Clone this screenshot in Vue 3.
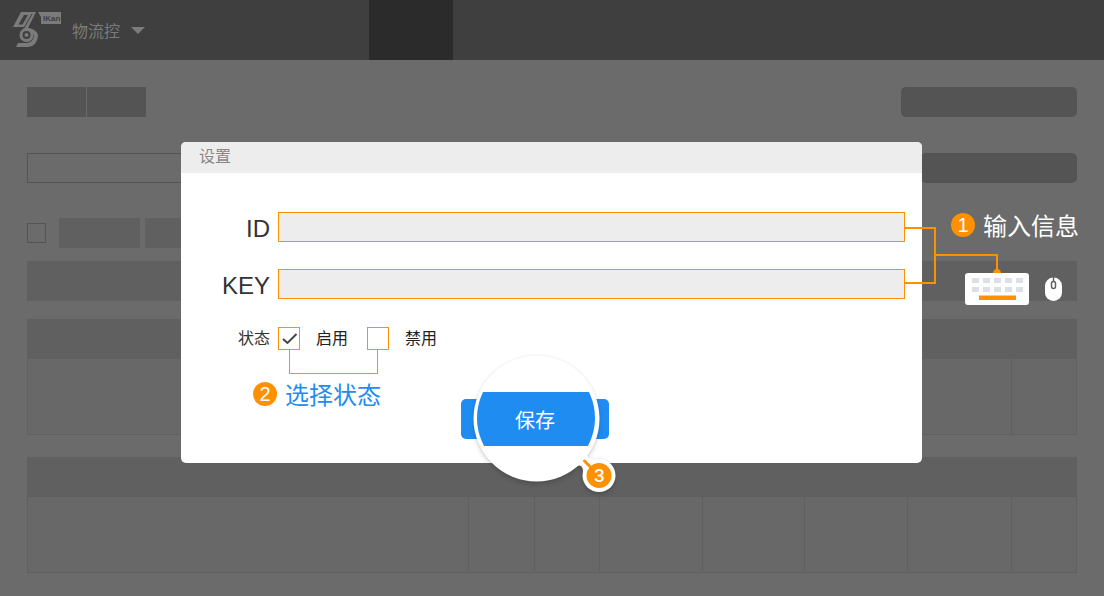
<script setup>
import { ref } from 'vue'

const accountId = ref('')
const accountKey = ref('')
const enabled = ref(true)
const disabled = ref(false)

const keyColumns = [67, 78, 89, 100, 111]
const keyRows = [78, 87]
</script>

<template>
  <div class="page">
    <header class="topbar">
      <a class="brand" href="#" aria-label="物流控">
        <svg class="logo" viewBox="0 0 50 36" width="50" height="36" aria-hidden="true">
          <path class="logo-fill" fill-rule="evenodd" d="M8 0H23L15 16L18 16.500Q25 19 25 24Q24 34 15 35H3L5 31H14Q20 30 21 24Q20 19 14 18H10L11.500 15H0Z M11 3L5.500 12.500H9.500L15 3Z" />
          <path class="logo-gap" d="M19 2L11 16" />
          <circle class="logo-line" cx="13.500" cy="23" r="5.500" />
          <circle class="logo-fill" cx="13.500" cy="23" r="2" />
          <path class="logo-fill" d="M25 0H48V12H28V5Z" />
          <text class="logo-text" x="30" y="9">IKan</text>
        </svg>
        <span class="brand-name">物流控</span>
        <svg class="caret" viewBox="0 0 14 7" width="14" height="7" aria-hidden="true">
          <path d="M0 0H14L7 7Z" />
        </svg>
      </a>
      <nav class="nav"><span class="nav-active"></span></nav>
    </header>

    <main class="content">
      <div class="row row-top">
        <div class="tabs"><span></span><span></span></div>
        <div class="pill"></div>
      </div>
      <div class="row row-search">
        <input class="search" type="text" aria-label="搜索" tabindex="-1" />
        <div class="pill pill-short"></div>
      </div>
      <div class="row row-tools">
        <input class="tick-all" type="checkbox" aria-label="全选" tabindex="-1" />
        <span class="tool"></span>
        <span class="tool"></span>
      </div>
      <div class="bar"></div>
      <section v-for="n in 2" :key="n" class="panel" :class="{ last: n === 2 }">
        <div class="panel-head"></div>
        <div class="panel-body"><span v-for="c in 8" :key="c"></span></div>
      </section>
    </main>

    <div class="overlay">
      <form class="dialog" role="dialog" aria-labelledby="dialog-title" @submit.prevent>
        <h1 id="dialog-title" class="dialog-title">设置</h1>
        <div class="fields">
          <div class="field">
            <label class="name" for="account-id">ID</label>
            <input id="account-id" v-model="accountId" class="entry" type="text" />
          </div>
          <div class="field">
            <label class="name" for="account-key">KEY</label>
            <input id="account-key" v-model="accountKey" class="entry" type="text" />
          </div>
          <div class="field">
            <span class="name small">状态</span>
            <div class="choices">
              <label class="choice">
                <span class="box">
                  <input v-model="enabled" type="checkbox" />
                  <svg v-if="enabled" viewBox="0 0 22 23" width="22" height="23" aria-hidden="true">
                    <path d="M5 12L9.500 16L18.500 7" />
                  </svg>
                </span>
                启用
              </label>
              <label class="choice">
                <span class="box">
                  <input v-model="disabled" type="checkbox" />
                  <svg v-if="disabled" viewBox="0 0 22 23" width="22" height="23" aria-hidden="true">
                    <path d="M5 12L9.500 16L18.500 7" />
                  </svg>
                </span>
                禁用
              </label>
              <span class="bracket"></span>
            </div>
          </div>
        </div>

        <div class="actions">
          <p class="step step-two"><span class="badge">2</span>选择状态</p>
          <button class="save" type="submit">
            <svg class="lens" viewBox="0 0 148 40" width="148" height="40" aria-hidden="true">
              <defs>
                <clipPath id="lens-clip"><circle cx="75" cy="19" r="59" /></clipPath>
              </defs>
              <g class="lens-glass">
                <circle cx="75.500" cy="19.500" r="63" />
                <circle cx="138" cy="76.500" r="16.500" />
                <path d="M110 71Q117 65 120 67Q123 70 122 78L138 61Q130 61 127 58Q125 56 129 50Z" />
              </g>
              <rect class="lens-fill" x="10" y="-7" width="130" height="54" clip-path="url(#lens-clip)" />
              <path class="pointer" d="M123.500 62L134 72.500" />
              <circle class="pointer-dot" cx="138" cy="76.500" r="12.500" />
              <text class="pointer-text" x="138.500" y="83">3</text>
            </svg>
            <span class="save-text">保存</span>
          </button>
        </div>

        <aside class="guide">
          <svg viewBox="0 0 160 110" width="160" height="110" aria-hidden="true">
            <path class="wire" d="M0 28H30V83H0M30 55H92V72" />
            <path class="node" d="M88 74Q88 69 92 69T96 74Z" />
            <rect class="device" x="60" y="73" width="64" height="32" rx="3" />
            <template v-for="y in keyRows" :key="y">
              <rect v-for="x in keyColumns" :key="x" class="keycap" :x="x" :y="y" width="7" height="5" />
            </template>
            <rect class="spacebar" x="74" y="95.500" width="37" height="4.500" />
            <rect class="device" x="140" y="77.500" width="17" height="23.500" rx="8.500" />
            <path class="wheel" d="M148.500 77V81" />
            <rect class="wheel" x="146.500" y="81.500" width="4" height="7" rx="2" />
          </svg>
          <p class="step step-one"><span class="badge">1</span>输入信息</p>
        </aside>
      </form>
    </div>
  </div>
</template>

<style>
body {
  margin: 0;
  background: #6b6b6b;
}
</style>

<style scoped>
* {
  box-sizing: border-box;
}

.page {
  position: relative;
  min-height: 100vh;
  background: #6b6b6b;
  font-family: "Liberation Sans", "Noto Sans CJK SC", sans-serif;
}

.topbar {
  display: flex;
  height: 60px;
  background: #3f3f3f;
}

.brand {
  display: flex;
  align-items: center;
  width: 369px;
  padding-left: 13px;
  color: #7b7b7b;
  font-size: 16px;
  text-decoration: none;
}

.brand-name {
  margin: 0 11px 0 9px;
}

.caret {
  fill: #7b7b7b;
}

.logo-line {
  fill: #3f3f3f;
  stroke: #7b7b7b;
  stroke-width: 3;
}

.logo-gap {
  stroke: #3f3f3f;
  stroke-width: 1;
}

.logo-fill {
  fill: #7b7b7b;
}

.logo-text {
  fill: #3f3f3f;
  font-size: 8px;
  font-weight: 700;
}

.nav-active {
  display: block;
  width: 84px;
  height: 100%;
  background: #2b2b2b;
}

.content {
  padding: 27px 27px 0;
}

.row {
  display: flex;
  height: 30px;
}

.row-top,
.row-search {
  justify-content: space-between;
  margin-bottom: 36px;
}

.tabs {
  display: flex;
  gap: 1px;
}

.tabs span {
  width: 59px;
  background: #545454;
}

.pill {
  width: 176px;
  border-radius: 5px;
  background: #545454;
}

.pill-short {
  width: 156px;
}

.search {
  width: 300px;
  border: 1px solid #545454;
  background: transparent;
}

.row-search {
  margin-bottom: 35px;
}

.row-tools {
  align-items: center;
  gap: 5px;
  margin-bottom: 13px;
}

.tick-all {
  appearance: none;
  width: 19px;
  height: 20px;
  margin: 0 8px 0 0;
  border: 1px solid #545454;
}

.tool {
  width: 81px;
  height: 30px;
  background: #606060;
}

.bar {
  height: 40px;
  margin-bottom: 18px;
  background: #606060;
}

.panel {
  margin-bottom: 22px;
  border: 1px solid #606060;
  border-top: 0;
  background: #686868;
}

.panel.last {
  margin-bottom: 0;
}

.panel-head {
  height: 40px;
  background: #606060;
}

.panel-body {
  display: grid;
  grid-template-columns: 440fr 66fr 65fr 103fr 102fr 103fr 104fr 65fr;
  height: 75px;
}

.panel-body span + span {
  border-left: 1px solid #606060;
}

.overlay {
  position: absolute;
  inset: 0;
  padding: 142px 182px 0 181px;
}

.dialog {
  position: relative;
  border-radius: 5px;
  background: #fff;
}

.dialog-title {
  margin: 0;
  padding: 0 0 2px 18px;
  border-radius: 5px 5px 0 0;
  background: #ededed;
  color: #888;
  font-size: 16px;
  font-weight: 400;
  line-height: 29px;
}

.fields {
  display: flex;
  flex-direction: column;
  gap: 27px;
  padding: 39px 17px 0 0;
}

.field {
  display: grid;
  grid-template-columns: 89px 1fr;
  align-items: center;
  column-gap: 8px;
}

.name {
  padding-top: 3px;
  color: #333;
  font-size: 24px;
  line-height: 27px;
  text-align: right;
}

.name.small {
  padding-top: 0;
  font-size: 16px;
  line-height: 25px;
}

.entry {
  width: 100%;
  height: 30px;
  padding: 0 8px;
  border: 1px solid #ff9000;
  border-radius: 0;
  outline: 0;
  background: #ededed;
  font: inherit;
}

.choices {
  position: relative;
  display: flex;
  gap: 19px;
}

.choice {
  display: flex;
  align-items: center;
  gap: 16px;
  color: #222;
  font-size: 16px;
  line-height: 25px;
}

.box {
  position: relative;
  width: 22px;
  height: 23px;
}

.box input {
  appearance: none;
  display: block;
  width: 22px;
  height: 23px;
  margin: 0;
  border: 1px solid #ff9000;
  background: #fff;
}

.box svg {
  position: absolute;
  inset: 0;
  fill: none;
  stroke: #444;
  stroke-width: 2;
  pointer-events: none;
}

.bracket {
  position: absolute;
  top: 24px;
  left: 11px;
  width: 89px;
  height: 24px;
  border: 1px solid #ff9000;
  border-top: 0;
}

.actions {
  display: grid;
  grid-template-columns: 1fr auto 1fr;
  align-items: start;
  padding: 31px 33px 24px 0;
}

.step {
  display: flex;
  align-items: flex-start;
  gap: 8px;
  margin: 0;
  font-size: 24px;
  line-height: 28px;
  white-space: nowrap;
}

.badge {
  width: 24px;
  height: 24px;
  border-radius: 50%;
  background: #ff9000;
  color: #fff;
  font-size: 20px;
  line-height: 25px;
  text-align: center;
}

.step-two {
  padding-left: 72px;
  color: #1f8cf2;
}

.save {
  position: relative;
  width: 148px;
  height: 40px;
  margin-top: 17px;
  padding: 0;
  border: 0;
  border-radius: 5px;
  background: #1f8cf2;
  color: #fff;
  font: inherit;
  font-size: 20px;
}

.lens {
  position: absolute;
  top: 0;
  left: 0;
  overflow: visible;
}

.lens-glass {
  fill: #fff;
  filter: drop-shadow(0 0 1px rgba(0, 0, 0, 0.1)) drop-shadow(0 3px 2px rgba(0, 0, 0, 0.15));
}

.lens-fill {
  fill: #1f8cf2;
}

.pointer {
  stroke: #ff9000;
  stroke-width: 3;
  stroke-linecap: round;
}

.pointer-dot {
  fill: #ff9000;
}

.pointer-text {
  fill: #fff;
  font-family: Roboto, "Liberation Sans", sans-serif;
  font-size: 19px;
  font-weight: 500;
  text-anchor: middle;
}

.save-text {
  position: relative;
}

.guide {
  position: absolute;
  top: 58px;
  left: calc(100% - 17px);
}

.guide svg {
  display: block;
}

.step-one {
  position: absolute;
  top: 13px;
  left: 46px;
  color: #fff;
}

.wire {
  fill: none;
  stroke: #ff9000;
  stroke-width: 2;
}

.node,
.spacebar {
  fill: #ff9000;
}

.device {
  fill: #fff;
}

.keycap {
  fill: #dcdfe5;
}

.wheel {
  fill: none;
  stroke: #606060;
  stroke-width: 1.500;
}
</style>
